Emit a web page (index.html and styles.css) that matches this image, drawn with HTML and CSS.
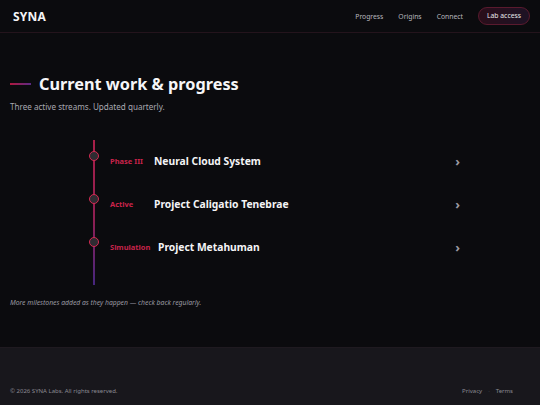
FILE: index.html
```html
<!DOCTYPE html>
<html lang="en">
<head>
<meta charset="utf-8">
<link rel="stylesheet" href="styles.css">
</head>
<body>
<header class="topbar">
  <div class="brand">SYNA</div>
  <nav class="nav">
    <a class="nav-link" href="#">Progress</a>
    <a class="nav-link" href="#">Origins</a>
    <a class="nav-link" href="#">Connect</a>
    <a class="nav-cta" href="#">Lab access</a>
  </nav>
</header>
<main class="main">
  <section class="intro">
    <h1 class="title"><span class="dash"></span>Current work &amp; progress</h1>
    <p class="subtitle">Three active streams. Updated quarterly.</p>
  </section>
  <section class="timeline">
    <div class="rail"></div>
    <div class="item">
      <span class="dot"></span>
      <span class="tag">Phase III</span>
      <span class="name">Neural Cloud System</span>
      <span class="chev">&#8250;</span>
    </div>
    <div class="item">
      <span class="dot"></span>
      <span class="tag">Active</span>
      <span class="name">Project Caligatio Tenebrae</span>
      <span class="chev">&#8250;</span>
    </div>
    <div class="item">
      <span class="dot"></span>
      <span class="tag">Simulation</span>
      <span class="name">Project Metahuman</span>
      <span class="chev">&#8250;</span>
    </div>
  </section>
  <p class="note">More milestones added as they happen — check back regularly.</p>
</main>
<footer class="footer">
  <span class="copy">© 2026 SYNA Labs. All rights reserved.</span>
  <span class="links"><a href="#">Privacy</a><span class="sep">·</span><a href="#">Terms</a></span>
</footer>
</body>
</html>
```
FILE: styles.css
```css
* { box-sizing: border-box; }
html, body { margin: 0; padding: 0; }
body {
  width: 540px;
  height: 405px;
  overflow: hidden;
  background: #0b0b0e;
  color: #f2f2f4;
  font-family: "Noto Sans", "Open Sans", sans-serif;
  display: flex;
  flex-direction: column;
}
a { color: inherit; text-decoration: none; }

.topbar {
  height: 33px;
  flex: none;
  border-bottom: 1px solid #24141c;
  display: flex;
  align-items: center;
  justify-content: space-between;
  padding: 0 10px 0 13px;
}
.brand { font-weight: 700; font-size: 12px; letter-spacing: 0.2px; color: #f4f4f6; }
.nav { display: flex; align-items: center; }
.nav-link { font-size: 6.8px; color: #b8b8be; margin-right: 15px; }
.nav-link:last-of-type { margin-right: 15px; }
.nav-cta {
  font-size: 6.8px;
  color: #e8e8ec;
  padding: 3px 8px 4px;
  border-radius: 9px;
  border: 1px solid #5a1a2e;
  background: linear-gradient(90deg, #2a0e1a, #1d1224);
}

.main { flex: 1; padding: 0 10px; }
.intro { padding-top: 39px; }
.title {
  margin: 0;
  display: flex;
  align-items: center;
  font-size: 16.3px;
  font-weight: 700;
  line-height: 24px;
  color: #f6f6f8;
}
.dash {
  width: 21px;
  height: 2px;
  margin-right: 8px;
  background: linear-gradient(90deg, #b0183e, #5b2a86);
}
.subtitle { margin: 5px 0 0; font-size: 8.1px; line-height: 12px; color: #a8a8b0; }

.timeline {
  position: relative;
  width: 380px;
  height: 145px;
  margin: 27px auto 0;
}
.rail {
  position: absolute;
  left: 13px;
  top: 0;
  bottom: 0;
  width: 2px;
  background: linear-gradient(180deg, #a81f48 0%, #8e1f52 55%, #46267e 100%);
}
.item {
  position: relative;
  height: 43px;
  display: flex;
  align-items: flex-start;
  padding: 14px 0 0 30px;
  line-height: 14px;
}
.dot {
  position: absolute;
  left: 9px;
  top: 10.5px;
  width: 10px;
  height: 10px;
  border-radius: 50%;
  border: 1.5px solid #d42a52;
  background: #2e2c32;
}
.tag {
  min-width: 44px;
  font-size: 7.5px;
  font-weight: 700;
  color: #c8234a;
}
.item:nth-child(4) .tag { margin-right: 4px; }
.name {
  flex: 1;
  font-size: 10.3px;
  font-weight: 700;
  color: #f4f4f6;
}
.chev { font-size: 13px; line-height: 14px; color: #9a9aa2; font-weight: 700; }

.note { margin: 13px 0 0; font-size: 6.8px; font-style: italic; color: #9a9aa2; }

.footer {
  height: 58px;
  flex: none;
  background: #18171c;
  border-top: 1px solid #1f1a20;
  display: flex;
  align-items: flex-end;
  justify-content: space-between;
  padding: 0 27px 10px 10px;
  font-size: 6px;
  color: #8a8a92;
}
.links { display: flex; align-items: center; }
.sep { margin: 0 6px; color: #55555c; }
```
